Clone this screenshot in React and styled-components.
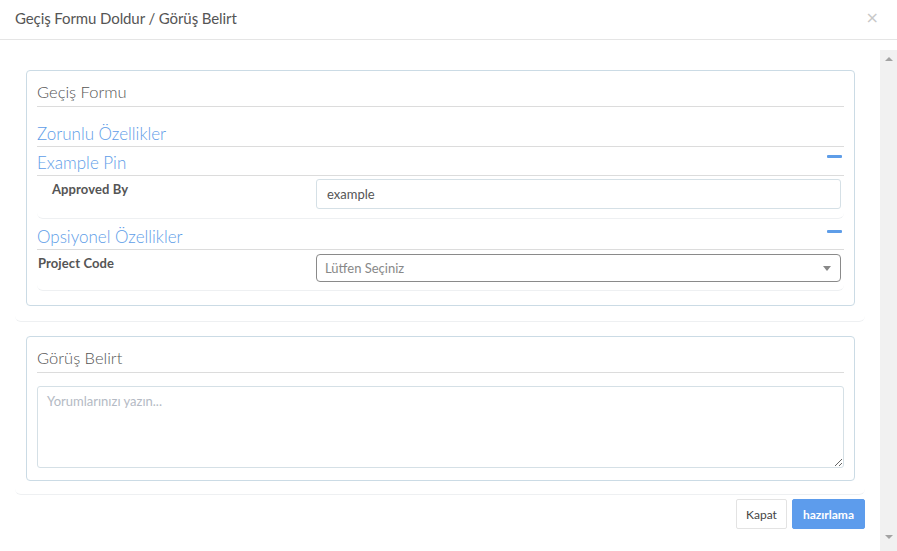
import React from "react";
import styled, { createGlobalStyle } from "styled-components";

const Global = createGlobalStyle`
  html, body { margin: 0; padding: 0; background: #fff; }
  body { font-family: "Lato", "Open Sans", sans-serif; color: #555; }
  * { box-sizing: border-box; }
`;

const Modal = styled.div`
  width: 897px;
  height: 551px;
  display: flex;
  flex-direction: column;
  background: #fff;
  overflow: hidden;
`;

const Header = styled.div`
  height: 40px;
  flex: none;
  display: flex;
  align-items: center;
  justify-content: space-between;
  padding: 0 18px 3px 15px;
  border-bottom: 1px solid #e5e5e5;
`;

const Title = styled.div`
  font-size: 15px;
  color: #555;
  letter-spacing: -0.1px;
`;

const Close = styled.div`
  font-size: 16px;
  color: #c8c8c8;
  font-family: "DejaVu Sans", sans-serif;
  line-height: 1;
`;

const BodyArea = styled.div`
  flex: 1;
  display: flex;
  padding-top: 10px;
  min-height: 0;
`;

const Content = styled.div`
  flex: 1;
  padding: 9px 15px 0 15px;
  display: flex;
  flex-direction: column;
`;

const Scrollbar = styled.div`
  width: 17px;
  flex: none;
  background: #f1f1f1;
  display: flex;
  flex-direction: column;
  justify-content: space-between;
  align-items: center;
  padding: 7px 0 12px;
`;

const Arrow = styled.div`
  width: 0;
  height: 0;
  border-left: 4px solid transparent;
  border-right: 4px solid transparent;
  ${(p) =>
    p.$down
      ? "border-top: 4px solid #a3a3a3;"
      : "border-bottom: 4px solid #a3a3a3;"}
`;

const Wrapper = styled.div`
  padding: 11px 10px ${(p) => p.$pb}px 11px;
  border-bottom: 1px solid #eef0f2;
  border-radius: 0 0 6px 6px;
  margin-bottom: ${(p) => p.$mb || 0}px;
`;

const Panel = styled.div`
  border: 1px solid #cbdbe5;
  border-radius: 4px;
  padding: ${(p) => p.$pad};
`;

const PanelTitle = styled.div`
  font-size: 16.5px;
  font-weight: 300;
  color: #555;
  height: 26px;
  line-height: 22px;
  border-bottom: 1px solid #dcdcdc;
`;

const SectionHead = styled.div`
  display: flex;
  align-items: flex-end;
  justify-content: space-between;
  color: #5e9de8;
  font-size: 17px;
  font-weight: 300;
  height: ${(p) => p.$h}px;
  padding-bottom: 2px;
  border-bottom: 1px solid #dcdcdc;
`;

const Minus = styled.span`
  width: 15px;
  height: 3px;
  background: #5e9de8;
  border-radius: 1px;
  margin-right: 2px;
  align-self: flex-start;
  margin-top: ${(p) => p.$top}px;
`;

const Row = styled.div`
  display: grid;
  grid-template-columns: 279px 1fr;
  align-items: start;
  padding: ${(p) => p.$pad};
  padding-right: 3px;
  border-bottom: 1px solid #eef0f2;
  border-radius: 0 0 6px 6px;
`;

const Label = styled.div`
  font-size: 13px;
  font-weight: 700;
  color: #555;
  letter-spacing: 0.1px;
  padding-left: ${(p) => p.$indent}px;
  padding-top: ${(p) => p.$top}px;
`;

const Input = styled.input`
  height: 30px;
  width: 100%;
  border: 1px solid #d5e0e6;
  border-radius: 3px;
  padding: 0 10px;
  font-family: inherit;
  font-size: 13px;
  color: #555;
  outline: none;
`;

const Select = styled.div`
  height: 28px;
  border: 1px solid #8a8a8a;
  border-radius: 4px;
  display: flex;
  align-items: center;
  justify-content: space-between;
  padding: 0 9px 0 8px;
  font-size: 13px;
  color: #888;
`;

const Caret = styled.span`
  width: 0;
  height: 0;
  border-left: 4px solid transparent;
  border-right: 4px solid transparent;
  border-top: 5px solid #888;
`;

const TextArea = styled.textarea`
  display: block;
  width: 100%;
  height: 82px;
  margin-top: 13px;
  border: 1px solid #d5e0e6;
  border-radius: 3px;
  padding: 6px 9px;
  font-family: inherit;
  font-size: 13px;
  color: #555;
  resize: vertical;
  outline: none;
  &::placeholder { color: #b4bac4; }
`;

const Footer = styled.div`
  display: flex;
  justify-content: flex-end;
  gap: 5px;
  padding-top: 4px;
`;

const Button = styled.button`
  height: 30px;
  padding: 0 ${(p) => (p.$primary ? 10 : 9)}px;
  font-family: inherit;
  font-size: 12px;
  font-weight: ${(p) => (p.$primary ? 700 : 400)};
  border-radius: 2px;
  border: 1px solid ${(p) => (p.$primary ? "#5d9cec" : "#e3e3e3")};
  background: ${(p) => (p.$primary ? "#5d9cec" : "#fff")};
  color: ${(p) => (p.$primary ? "#fff" : "#444")};
`;

export default function App() {
  return (
    <>
      <Global />
      <Modal>
        <Header>
          <Title>Geçiş Formu Doldur / Görüş Belirt</Title>
          <Close>×</Close>
        </Header>
        <BodyArea>
          <Content>
            <Wrapper $pb={15} $mb={3}>
              <Panel $pad="10px 10px 14px 10px">
                <PanelTitle>Geçiş Formu</PanelTitle>
                <SectionHead $h={40}>Zorunlu Özellikler</SectionHead>
                <SectionHead $h={29}>
                  Example Pin
                  <Minus $top={8} />
                </SectionHead>
                <Row $pad="3px 0 9px 0">
                  <Label $indent={15} $top={2}>Approved By</Label>
                  <Input defaultValue="example" />
                </Row>
                <SectionHead $h={31}>
                  Opsiyonel Özellikler
                  <Minus $top={11} />
                </SectionHead>
                <Row $pad="4px 0 8px 0">
                  <Label $indent={1} $top={1}>Project Code</Label>
                  <Select>
                    Lütfen Seçiniz
                    <Caret />
                  </Select>
                </Row>
              </Panel>
            </Wrapper>
            <Wrapper $pb={13}>
              <Panel $pad="10px 10px 12px 10px">
                <PanelTitle>Görüş Belirt</PanelTitle>
                <TextArea placeholder="Yorumlarınızı yazın..." />
              </Panel>
            </Wrapper>
            <Footer>
              <Button>Kapat</Button>
              <Button $primary>hazırlama</Button>
            </Footer>
          </Content>
          <Scrollbar>
            <Arrow />
            <Arrow $down />
          </Scrollbar>
        </BodyArea>
      </Modal>
    </>
  );
}
